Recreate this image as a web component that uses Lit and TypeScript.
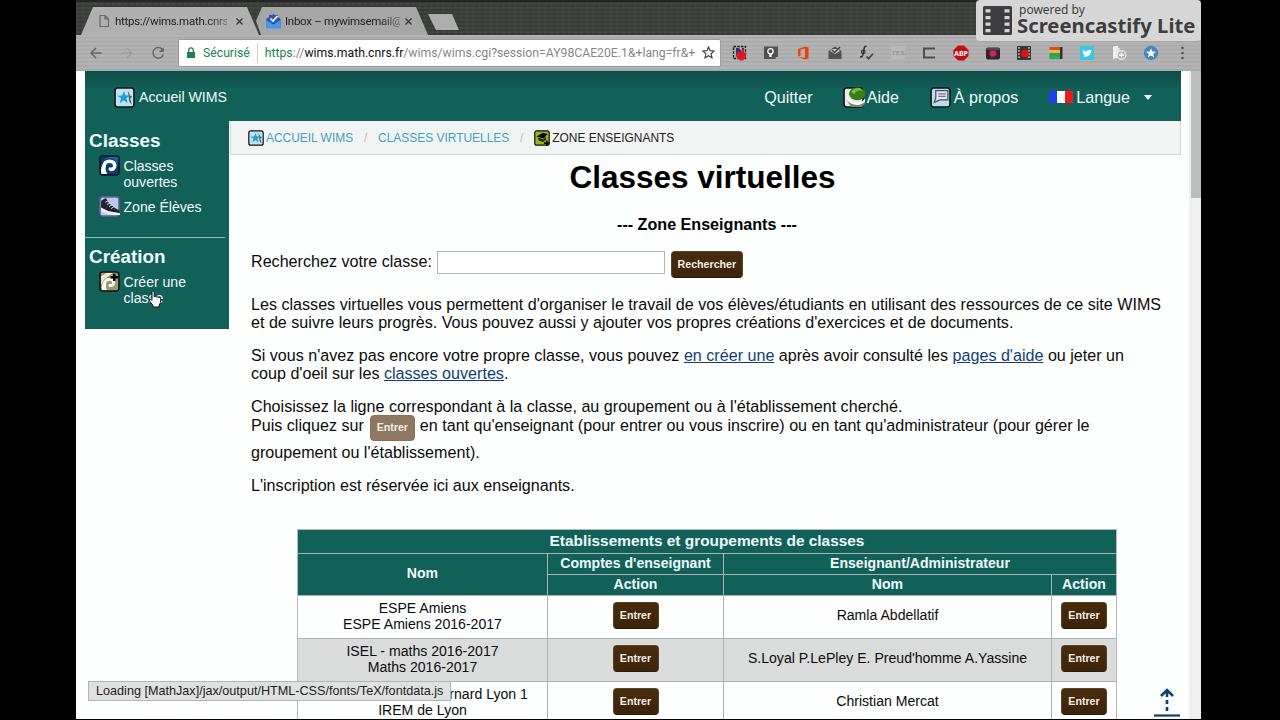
import { LitElement, html, svg, css } from "lit";
import { customElement, property } from "lit/decorators.js";

const frame = (inner: unknown, bg: string) => svg`
  <rect x="1" y="1" width="18" height="18" rx="2.5" fill=${bg} stroke="#0b1517" stroke-width="1.5"/>${inner}`;

const glyphs: Record<string, unknown> = {
  star: frame(svg`
    <path d="M13 3l2.400 5.200 2.100 1-2 1.800 1.500 6-2.500-3z" fill="#4d6570"/>
    <path d="M9.600 3.800l1.200 4 4.400.2-3.500 2.700 1.300 4.600-3.700-2.700-3.900 2.900 1.400-4.800L3 8.300l4.700-.2z" fill="#1b9fd8"/>`, "#c4e2ee"),
  swirl: frame(svg`
    <path d="M2 9c2-5 5-7 9-7h7v10C18 6 14 2.800 9.500 3.200 6 3.600 3.500 5.500 2 9z" fill="#1569ac"/>
    <path d="M5 10.500C5 7.500 7.200 6 10 6c3 0 5 1.600 5 4.200 0 2.500-2.300 4-4.200 3.300" fill="none" stroke="#fff" stroke-width="3.400" stroke-linecap="round"/>
    <path d="M2.300 18C1.500 14 2 10.500 4 8l2.500 2.500c-.6 2.600 0 5.500 1.500 7.500z" fill="#fff"/>`, "#0a3d70"),
  shoe: svg`
    <rect x="1" y="1" width="18" height="18" rx="2" fill="#b9cdeb" stroke="#7558a0" stroke-width="1.400"/>
    <path d="M2 4.500L6.500 2 9.500 7l5 4 5 3v2.500L9 14.500 2 11z" fill="#23232b"/>
    <path d="M2 11.500l7 3 11 2v1.500H12L2 14.500z" fill="#eef0f6"/>
    <path d="M6 6l2.500-1.200M7.500 8l3-1.200M9.500 10l2.700-1.300M11.500 12l2.500-1.600" stroke="#dfe3ee" stroke-width=".9"/>`,
  create: frame(svg`
    <path d="M2 5l5-3.200h6L5 8 2 13z" fill="#efe9cf"/>
    <path d="M5.500 12C5.500 9.500 7.500 8 10 8c2.600 0 4 1.300 4 3.200 0 1.900-1.800 3-3.600 2.600" fill="none" stroke="#fffdf0" stroke-width="2.800" stroke-linecap="round"/>
    <path d="M2.800 18c-.7-3 0-6 2-8l2 2.500c-.5 2-.2 4 .8 5.500z" fill="#fffdf0"/>
    <path d="M14.500 2.500v7M11 6h7" stroke="#000" stroke-width="2.300"/>`, "#9b9a72"),
  help: svg`
    <rect x="1" y="1" width="18" height="18" rx="2.500" fill="#e9ebe8" stroke="#0b1517" stroke-width="1.500"/>
    <path d="M3 12c5 6 13 6 18 1v3l-3 3H8z" fill="#7e837d"/>
    <path d="M4 7c1 7 8 9 14 7l3-3v3c-5 5-14 4-17-2z" fill="#f8f9f7"/>
    <ellipse cx="13.500" cy="6.500" rx="7.800" ry="6" fill="#387e18"/>
    <path d="M8 5c1-3 4-4 8-4l3 3c-3-1-7-1-8 3z" fill="#7cb650"/>`,
  about: frame(svg`
    <path d="M5.500 3.500H17v8.700H9.500L4 14.500l1.500-3.800z" fill="#dfe4ee" stroke="#45506a" stroke-width="1.200"/>
    <path d="M8 6.500h7M8 9h7" stroke="#7d6f80" stroke-width="1.100"/>`, "#b9dced"),
  teacher: frame(svg`
    <path d="M3 8l8-4.500 6 1.500-5 5.500z" fill="#0c0f04"/><path d="M5 9.500l7 2.500 3-4v4l-3.500 3L6 13z" fill="#20270a"/>
    <path d="M16 13v7M12.500 16.500h7" stroke="#101404" stroke-width="2.200"/>`, "#9bb422"),
  flag: svg`<path d="M0 4h8v12H0z" fill="#1b3ff0"/><path d="M8 4h8v12H8z" fill="#fff"/><path d="M16 4h8v12h-8z" fill="#f01a1a"/>`,
};

@customElement("wims-icon")
class WimsIcon extends LitElement {
  static styles = css`
    :host { display: inline-flex; flex: none; }
    svg { display: block; width: 100%; height: 100%; overflow: visible; }
  `;
  @property() name = "star";
  render() {
    return html`<svg viewBox=${this.name === "flag" ? "0 0 24 20" : "0 0 20 20"}>${glyphs[this.name]}</svg>`;
  }
}

const film = svg`
  <rect width="29" height="29" rx="1.500" fill="#3d3d3f"/>
  <path d="M2.500 3.200h5v3.200h-5zM2.500 10h5v3.200h-5zM2.500 16.500h5v3.200h-5zM2.500 23h5v3.200h-5zM21.500 3.200h5v3.200h-5zM21.500 10h5v3.200h-5zM21.500 16.500h5v3.200h-5zM21.500 23h5v3.200h-5z" fill="#d6d6d6"/>`;

const extensions = [
  svg`<rect x="1.500" y="1.500" width="12" height="12" fill="#aaa" stroke="#222" stroke-width="1.400" stroke-dasharray="2.500 1.200"/>
      <path d="M4 3h3l3 4V3h2v7H4z" fill="#27347e"/><path d="M5 7.500l2-1 2 1 1-4 2 1v3h2v5l-3 3H8l-4-4z" fill="#e01522"/>`,
  svg`<path d="M1 1.500h14V12h-2.500v2H1z" fill="#505252"/><circle cx="7.500" cy="6.300" r="2.700" fill="none" stroke="#fff" stroke-width="1.300"/><path d="M6.300 9h2.400v3H6.300z" fill="#fff"/>`,
  svg`<path d="M10 1.500l3.500 1v11L10 14.500 3 12l7 .7V3.500L5.500 4.600v6L3 11.700V4z" fill="#e8410c"/>`,
  svg`<path d="M1.500 6L8 1.500 14.500 6v8h-13z" fill="#505252"/><path d="M3 6l5 3 5-3-2-2H5z" fill="#c9c9c9"/><path d="M5 5l2.500 2.500L13 2" fill="none" stroke="#444" stroke-width="1.500"/>`,
  svg`<path d="M8.500 1.500C6 .5 6 4 5.500 7s-1 5.500-3.500 4.800" fill="none" stroke="#333" stroke-width="1.500"/><circle cx="5.300" cy="6.800" r="1.800" fill="none" stroke="#333" stroke-width="1.100"/><path d="M8.500 11.500l2 2.300 4.500-5" fill="none" stroke="#444" stroke-width="1.700"/>`,
  svg`<rect x="1" y="1" width="14" height="13" fill="#b9b9b9"/><text x="1.500" y="10" font-family="Liberation Serif" font-size="7" fill="#858585">TEX</text>`,
  svg`<path d="M14 3.500H3v9h11" fill="none" stroke="#4c4c4c" stroke-width="2"/>`,
  svg`<path d="M5 .5h6l4.500 4.500v6L11 15.500H5L.5 11V5z" fill="#c50c15"/><text x="8" y="10.700" text-anchor="middle" font-family="Open Sans" font-weight="700" font-size="6.800" fill="#fff">ABP</text>`,
  svg`<rect x="1" y="2.500" width="14" height="12" rx="2" fill="#2c272b"/><path d="M2 4h12" stroke="#777" stroke-width="1"/><circle cx="8" cy="8.500" r="3.600" fill="#cf2464" stroke="#712343" stroke-width="1.200"/>`,
  svg`<rect x="1" y="1" width="14" height="14" fill="#3c3438"/><path d="M3 2v12M13 2v12" stroke="#bbb" stroke-width="1.500" stroke-dasharray="1.700 1.400"/><circle cx="9" cy="8.500" r="3.800" fill="#f00b0b"/>`,
  svg`<path d="M12 2h2.500v12H12z" fill="#333"/><path d="M1.500 2H12v3.500H1.500z" fill="#d94b35"/><path d="M1.500 5H12v3H1.500z" fill="#f0bf25"/><path d="M1.500 8H12v3H1.500z" fill="#26a45c"/><path d="M1.500 11H12v3.200H1.500z" fill="#35a06a"/>`,
  svg`<rect x="1" y="1" width="14" height="14" fill="#39c8e4"/><path d="M4 5l4 2c0-2 2-3 3.500-1.700L13 5l-1 1.600c0 4-4.500 6.400-8 4.400l2-.6C4 9.500 3.500 7 4 5z" fill="#fff"/>`,
  svg`<path d="M2 1.500l5-.8v12L2 14z" fill="#eee"/><path d="M7 3h2v7H7z" fill="#ddd"/><circle cx="10.500" cy="10" r="4.300" fill="#aeb1b1" stroke="#ececec" stroke-width="1.200"/><path d="M8 10h5M10.500 7.500v5" stroke="#fff" stroke-width="1.300"/>`,
  svg`<circle cx="8" cy="8" r="7.200" fill="#4586bd"/><path d="M8 3.200l1.400 3.200 3.500.3-2.700 2.200.9 3.400L8 10.500l-3.100 1.800.9-3.400-2.700-2.200 3.500-.3z" fill="#fff"/>`,
  svg`<circle cx="8.500" cy="3" r="1.300" fill="#555"/><circle cx="8.500" cy="8" r="1.300" fill="#555"/><circle cx="8.500" cy="13" r="1.300" fill="#555"/>`,
];

@customElement("browser-chrome")
class BrowserChrome extends LitElement {
  static styles = css`
    :host { display: block; height: 71px; flex: none; font-family: Roboto, sans-serif; position: relative; }
    svg { display: block; flex: none; }
    .strip { height: 35px; display: flex; align-items: flex-end; padding-left: 5px; box-sizing: border-box;
      background-color: #3f413f;
      background-image: repeating-linear-gradient(0deg, #32343280 0 2px, transparent 2px 4px), repeating-linear-gradient(90deg, #4b4e4b60 0 3px, transparent 3px 6px);
      border-top: 2px solid #242624; }
    .tab { height: 28px; display: flex; align-items: center; font-size: 11.500px; letter-spacing: -0.280px; color: #202020; white-space: nowrap; box-sizing: border-box; }
    .tab.on { width: 178px; background: #b0b0b0; clip-path: polygon(0 100%, 12px 0, 166px 0, 178px 100%); padding-left: 17px; }
    .tab.off { width: 173px; margin-left: -3px; background: #a6a6a6; clip-path: polygon(0 50%, 6px 0, 160px 0, 172px 100%, 5px 100%); padding-left: 10px; }
    .label { mask-image: linear-gradient(90deg, #000 82%, #0006); }
    .on .label { width: 112px; margin-left: 5px; }
    .off .label { width: 115px; margin-left: 4px; }
    .x { margin-left: 8px; }
    .off .x { margin-left: 4px; }
    .plus { width: 31px; height: 16px; background: #adadad; clip-path: polygon(0 0, 24px 0, 31px 100%, 8px 100%); margin: 0 0 5px -1px; }
    .bar { height: 36px; box-sizing: border-box; display: flex; align-items: center;
      background: repeating-linear-gradient(0deg, #a9a9a9 0 1px, #b3b3b3 1px 3px, #adadad 3px 4px); border-bottom: 1px solid #9bb0ad; }
    .nav { width: 102px; display: flex; gap: 15px; padding-left: 12px; box-sizing: border-box; flex: none; }
    .omni { width: 543px; height: 28px; box-sizing: border-box; background: #fff; border: 1px solid #9b9b9b; border-radius: 2px; display: flex; align-items: center; font-size: 12.220px; color: #868686; white-space: nowrap; padding: 0 5px 0 7px; flex: none; }
    .lock { margin-right: 7px; }
    .green { color: #1a8450; }
    .sep { width: 1px; height: 20px; background: #ccc; margin: 0 7px 0 7px; }
    .url { flex: 1; }
    .host { color: #111; }
    .ext { display: flex; margin-left: 3px; }
    .ext div { width: 31.600px; display: flex; justify-content: center; }
    .badge { position: absolute; right: 0; top: 0; width: 225px; height: 41px; border-radius: 4px; background: #d6d6d6; color: #3d3d3f; display: flex; box-sizing: border-box; padding: 6px 0 0 7px; gap: 5px; font-family: "Noto Sans", sans-serif; white-space: nowrap; }
    .small { font-size: 12px; line-height: 15px; margin: -4px 0 0 2px; }
    .big { font-size: 20.300px; font-weight: 700; line-height: 17px; }
  `;
  render() {
    const close = svg`<path d="M1.500 1.500l6 6M7.500 1.500l-6 6" stroke="#333" stroke-width="1.300"/>`;
    return html`
      <div class="strip">
        <div class="tab on">
          <svg width="12" height="14"><path d="M2 1.500h5l3.500 3.500v7.500H2zM7 1.500V5h3.500" fill="none" stroke="#666" stroke-width="1.200"/></svg>
          <span class="label">https://wims.math.cnrs</span>
          <svg class="x" width="9" height="9">${close}</svg>
        </div>
        <div class="tab off">
          <svg width="15" height="15"><path d="M.5 5l7-5 7 5v9H.5z" fill="#1f4e9c"/><path d="M3 1h9v8H3z" fill="#2c5cb4"/><path d="M.5 6l7 4.500L14.500 6v8.500H.5z" fill="#4b94ea"/><path d="M4.500 4.500L7 7l4.500-5" fill="none" stroke="#fff" stroke-width="1.600"/></svg>
          <span class="label">Inbox – mywimsemail@</span>
          <svg class="x" width="9" height="9">${close}</svg>
        </div>
        <div class="plus"></div>
      </div>
      <div class="bar">
        <div class="nav">
          <svg width="16" height="16"><path d="M13.500 8H3M8 3L3 8l5 5" fill="none" stroke="#666" stroke-width="1.500"/></svg>
          <svg width="16" height="16"><path d="M2.500 8H13M8 3l5 5-5 5" fill="none" stroke="#9d9d9d" stroke-width="1.300"/></svg>
          <svg width="16" height="16"><path d="M12.700 5A5.300 5.300 0 1 0 13.300 9.500" fill="none" stroke="#666" stroke-width="1.500"/><path d="M13.800 2v5h-5z" fill="#666"/></svg>
        </div>
        <div class="omni">
          <svg class="lock" width="10" height="12"><path d="M1 5h8v6H1z" fill="#1a8450"/><path d="M2.700 5V3.200a2.300 2.300 0 0 1 4.600 0V5" fill="none" stroke="#1a8450" stroke-width="1.300"/></svg>
          <span class="green">Sécurisé</span><span class="sep"></span>
          <span class="url"><span class="green">https</span>://<span class="host">wims.math.cnrs.fr</span>/wims/wims.cgi?session=AY98CAE20E.1&amp;+lang=fr&amp;+</span>
          <svg width="13" height="13"><path d="M6.500 1l1.600 3.700 4 .4-3 2.700.9 4-3.500-2.100L3 11.800l.9-4-3-2.700 4-.4z" fill="none" stroke="#444" stroke-width="1.200"/></svg>
        </div>
        <div class="ext">${extensions.map((e) => html`<div><svg width="16" height="16">${e}</svg></div>`)}</div>
      </div>
      <div class="badge">
        <svg width="29" height="29">${film}</svg>
        <div><div class="small">powered by</div><div class="big">Screencastify Lite</div></div>
      </div>`;
  }
}

@customElement("app-root")
class AppRoot extends LitElement {
  static styles = css`
    :host { display: block; width: 1280px; height: 720px; background: #000; overflow: hidden; font-family: "Liberation Sans", Arial, sans-serif; color: #0c0c0c; }
    .screen { width: 1125px; height: 719px; margin-left: 76px; display: flex; flex-direction: column; background: #fdfefe; overflow: hidden; position: relative; }
    .view { flex: 1; display: flex; min-height: 0; }
    .page { width: 1096px; margin-left: 9px; flex: none; }
    .top { height: 50px; background: linear-gradient(#0f4d47, #126159 40%); color: #effafa; display: flex; align-items: center; padding: 2px 29px 0 29px; box-sizing: border-box; font-size: 16.100px; white-space: nowrap; }
    .top span { display: flex; align-items: center; }
    .brand { font-size: 14.150px; flex: 1; gap: 4px; }
    .ic { width: 21px; height: 21px; }
    .fl { width: 24px; height: 20px; }
    .quit { margin-right: 30px; }
    .aide { margin-right: 31px; gap: 3px; }
    .prop { margin-right: 31px; gap: 3px; }
    .lang { gap: 3px; }
    .caret { border: 4.500px solid transparent; border-top: 5px solid #effafa; border-bottom: 0; margin-left: 11px; }
    .cols { display: flex; align-items: flex-start; }
    .side { width: 144px; height: 208px; box-sizing: border-box; background: #126159; color: #effafa; padding-top: 9px; flex: none; }
    .side h3 { margin: 0; font-size: 18.900px; line-height: 22px; padding-left: 4px; }
    .item { display: flex; gap: 3px; padding-left: 14px; font-size: 14.050px; line-height: 16px; }
    .item wims-icon { width: 21px; height: 21px; }
    .item div { padding: 3px 0 0 0.500px; }
    .it1 { margin-top: 3px; }
    .it2 { margin-top: 6px; }
    .rule { height: 1px; width: 140px; background: #9bc0bb; margin: 20px 0 8px; }
    .it3 { margin-top: 3px; }
    .main { width: 952px; flex: none; white-space: nowrap; font-size: 16.125px; }
    .crumbs { height: 34px; box-sizing: border-box; margin-left: 1px; background: #f2f3f3; border: 1px solid #d6d8d8; border-top: 0; display: flex; align-items: center; font-size: 11.950px; color: #3fa3c2; padding-left: 17px; }
    .crumbs wims-icon { width: 16px; height: 16px; margin-right: 2px; }
    .crumbs i { font-style: normal; color: #bbb; width: 25px; text-align: center; }
    .cur { color: #222; }
    h1 { margin: 4px 0 0 -5px; font-size: 31.500px; line-height: 37px; text-align: center; color: #000; }
    h4 { margin: 18px 0 0 4px; font-size: 16.125px; line-height: 20px; text-align: center; color: #000; }
    .search { display: flex; margin: 17px 0 0 22px; height: 27px; align-items: flex-start; line-height: 21px; }
    .field { width: 228px; height: 23px; box-sizing: border-box; border: 1px solid #b4b4b4; background: #fff; margin: 0 6px 0 5px; padding: 0; }
    .btn { display: inline-flex; align-items: center; justify-content: center; width: 46px; height: 27px; border-radius: 4px; background: linear-gradient(#492c0d, #3c240b); color: #f6efe6; font-size: 10.650px; font-weight: 700; line-height: 12px; box-sizing: border-box; padding-bottom: 1px; border: 1px solid #5b4328; border-bottom-color: #2b1905; }
    .wide { width: 72px; padding-bottom: 2px; }
    .pale { width: 45px; height: 26px; background: #8f7863; border-color: #85705c; margin: 0 5px 0 6px; color: #f3eee9; }
    p { margin: 16px 0 0 22px; line-height: 17.500px; }
    .p1 { margin-top: 18px; }
    .row { display: flex; height: 29px; align-items: flex-start; margin-top: -1px; }
    .row span { line-height: 21px; }
    a { color: #123f73; text-decoration: underline; }
    .table { margin: 34px 0 0 68px; width: 820px; box-sizing: border-box; border: 1px solid #b5b9b9; display: grid; grid-template-columns: 249px 175px 327px 64px; grid-template-rows: 23px 20px 20px 42px 42px 42px; gap: 1px; background: #aeb2b2; font-size: 14.080px; line-height: 16px; text-align: center; }
    .table > div { background: #fdfefe; display: flex; align-items: center; justify-content: center; }
    .table > .two-line { padding-bottom: 2px; }
    .table > .who { padding-bottom: 3px; }
    .table > .h { background: #126159; color: #effafa; font-weight: 700; padding-bottom: 2px; }
    .table > .g { background: #dadbdb; }
    .table > .all { grid-column: 1 / 5; font-size: 15.400px; padding-bottom: 0; }
    .tall { grid-row: 2 / 4; }
    .two { grid-column: 3 / 5; }
    .table .btn { margin-top: -3px; }
    .scroll { margin-left: auto; width: 12px; background: #efefef; }
    .thumb { width: 10px; height: 127px; background: #bcbebe; margin-left: 2px; }
    .status { position: absolute; left: 12px; top: 681px; width: 363px; height: 20px; box-sizing: border-box; background: #dfe0e0; border: 1px solid #b3b4b4; padding-left: 7px; font-size: 12.640px; line-height: 19px; white-space: nowrap; color: #222; }
    .up { position: absolute; left: 1077px; top: 687px; }
    .hand { position: absolute; left: 72px; top: 290px; }
  `;

  private rows = [
    ["ESPE Amiens", "ESPE Amiens 2016-2017", "Ramla Abdellatif"],
    ["ISEL - maths 2016-2017", "Maths 2016-2017", "S.Loyal P.LePley E. Preud'homme A.Yassine"],
    ["Université Claude Bernard Lyon 1", "IREM de Lyon", "Christian Mercat"],
  ];

  render() {
    return html`<div class="screen">
      <browser-chrome></browser-chrome>
      <div class="view">
        <div class="page">
          <div class="top">
            <span class="brand"><wims-icon class="ic" name="star"></wims-icon>Accueil WIMS</span>
            <span class="quit">Quitter</span>
            <span class="aide"><wims-icon class="ic" name="help"></wims-icon>Aide</span>
            <span class="prop"><wims-icon class="ic" name="about"></wims-icon>À propos</span>
            <span class="lang"><wims-icon class="fl" name="flag"></wims-icon>Langue<span class="caret"></span></span>
          </div>
          <div class="cols">
            <div class="side">
              <h3>Classes</h3>
              <div class="item it1"><wims-icon name="swirl"></wims-icon><div>Classes<br>ouvertes</div></div>
              <div class="item it2"><wims-icon name="shoe"></wims-icon><div>Zone Élèves</div></div>
              <div class="rule"></div>
              <h3>Création</h3>
              <div class="item it3"><wims-icon name="create"></wims-icon><div>Créer une<br>classe</div></div>
            </div>
            <div class="main">
              <div class="crumbs"><wims-icon name="star"></wims-icon>ACCUEIL WIMS<i>/</i>CLASSES VIRTUELLES<i>/</i><wims-icon name="teacher"></wims-icon><span class="cur">ZONE ENSEIGNANTS</span></div>
              <h1>Classes virtuelles</h1>
              <h4>--- Zone Enseignants ---</h4>
              <div class="search">Recherchez votre classe:<input class="field" aria-label="classe"><span class="btn wide">Rechercher</span></div>
              <p class="p1">Les classes virtuelles vous permettent d'organiser le travail de vos élèves/étudiants en utilisant des ressources de ce site WIMS<br>et de suivre leurs progrès. Vous pouvez aussi y ajouter vos propres créations d'exercices et de documents.</p>
              <p>Si vous n'avez pas encore votre propre classe, vous pouvez <a>en créer une</a> après avoir consulté les <a>pages d'aide</a> ou jeter un<br>coup d'oeil sur les <a>classes ouvertes</a>.</p>
              <p>Choisissez la ligne correspondant à la classe, au groupement ou à l'établissement cherché.
                <span class="row"><span>Puis cliquez sur</span><span class="btn pale">Entrer</span><span>en tant qu'enseignant (pour entrer ou vous inscrire) ou en tant qu'administrateur (pour gérer le</span></span>
                groupement ou l'établissement).</p>
              <p>L'inscription est réservée ici aux enseignants.</p>
              <div class="table">
                <div class="h all">Etablissements et groupements de classes</div>
                <div class="h tall">Nom</div><div class="h">Comptes d'enseignant</div><div class="h two">Enseignant/Administrateur</div>
                <div class="h">Action</div><div class="h">Nom</div><div class="h">Action</div>
                ${this.rows.map((r, i) => {
                  const c = i % 2 ? "g" : "";
                  return html`<div class="two-line ${c}">${r[0]}<br>${r[1]}</div><div class=${c}><span class="btn">Entrer</span></div><div class="who ${c}">${r[2]}</div><div class=${c}><span class="btn">Entrer</span></div>`;
                })}
              </div>
            </div>
          </div>
        </div>
        <div class="scroll"><div class="thumb"></div></div>
      </div>
      <svg class="up" width="28" height="30"><path d="M14 4v6M14 13v4M14 20v4M8 9L14 3l6 6" fill="none" stroke="#123f73" stroke-width="2.600"/><path d="M1 28.500h26" stroke="#123f73" stroke-width="2.200"/></svg>
      <div class="status">Loading [MathJax]/jax/output/HTML-CSS/fonts/TeX/fontdata.js</div>
      <svg class="hand" width="15" height="18"><path d="M4 9.500V2.200c0-1.500 2.200-1.500 2.200 0V7c.3-.9 2-.8 2.200.2.600-.7 1.900-.4 2.100.5.900-.5 2.200 0 2.200 1.300 0 3-.4 4.200-1.500 6V17H5v-1.600L1.500 11c-.8-1.400.7-2.600 2.500-.7z" fill="#fff" stroke="#111" stroke-width="1"/></svg>
    </div>`;
  }
}
